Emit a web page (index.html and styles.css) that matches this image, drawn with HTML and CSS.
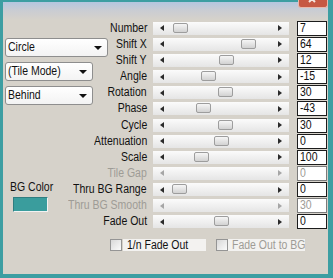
FILE: index.html
```html
<!DOCTYPE html>
<html>
<head>
<meta charset="utf-8">
<link rel="stylesheet" href="styles.css">
</head>
<body>
<div class="window">
  <div class="close"><svg width="30" height="8" viewBox="0 0 30 8"><path d="M11 -3 L17 3 M17 -3 L11 3" stroke="#f4e6e0" stroke-width="2" fill="none"/></svg></div>
  <div class="panel">
    <div class="main">
      <div class="left">
        <div class="select wide"><span class="t">Circle</span><i class="caret"></i></div>
        <div class="select"><span class="t">(Tile Mode)</span><i class="caret"></i></div>
        <div class="select"><span class="t">Behind</span><i class="caret"></i></div>
        <div class="bglabel t">BG Color</div>
        <div class="swatch"></div>
      </div>

      <div class="label">Number</div>
      <div class="track"><i class="arr l"></i><b class="thumb" style="left:20px"></b><i class="arr r"></i></div>
      <div class="num"><span class="t">7</span></div>

      <div class="label">Shift X</div>
      <div class="track"><i class="arr l"></i><b class="thumb" style="left:88px"></b><i class="arr r"></i></div>
      <div class="num"><span class="t">64</span></div>

      <div class="label">Shift Y</div>
      <div class="track"><i class="arr l"></i><b class="thumb" style="left:66px"></b><i class="arr r"></i></div>
      <div class="num"><span class="t">12</span></div>

      <div class="label">Angle</div>
      <div class="track"><i class="arr l"></i><b class="thumb" style="left:48px"></b><i class="arr r"></i></div>
      <div class="num"><span class="t">-15</span></div>

      <div class="label">Rotation</div>
      <div class="track"><i class="arr l"></i><b class="thumb" style="left:65px"></b><i class="arr r"></i></div>
      <div class="num"><span class="t">30</span></div>

      <div class="label">Phase</div>
      <div class="track"><i class="arr l"></i><b class="thumb" style="left:43px"></b><i class="arr r"></i></div>
      <div class="num"><span class="t">-43</span></div>

      <div class="label">Cycle</div>
      <div class="track"><i class="arr l"></i><b class="thumb" style="left:65px"></b><i class="arr r"></i></div>
      <div class="num"><span class="t">30</span></div>

      <div class="label">Attenuation</div>
      <div class="track"><i class="arr l"></i><b class="thumb" style="left:61px"></b><i class="arr r"></i></div>
      <div class="num"><span class="t">0</span></div>

      <div class="label">Scale</div>
      <div class="track"><i class="arr l"></i><b class="thumb" style="left:41px"></b><i class="arr r"></i></div>
      <div class="num"><span class="t">100</span></div>

      <div class="label off">Tile Gap</div>
      <div class="track off"><i class="arr l"></i><i class="arr r"></i></div>
      <div class="num off"><span class="t">0</span></div>

      <div class="label">Thru BG Range</div>
      <div class="track"><i class="arr l"></i><b class="thumb" style="left:19px"></b><i class="arr r"></i></div>
      <div class="num"><span class="t">0</span></div>

      <div class="label off">Thru BG Smooth</div>
      <div class="track off"><i class="arr l"></i><i class="arr r"></i></div>
      <div class="num off"><span class="t">30</span></div>

      <div class="label">Fade Out</div>
      <div class="track"><i class="arr l"></i><b class="thumb" style="left:61px"></b><i class="arr r"></i></div>
      <div class="num"><span class="t">0</span></div>
    </div>

    <div class="checks">
      <div class="check"><span class="box"></span><span class="ctext"><span class="t">1/n Fade Out</span></span></div>
      <div class="check dis"><span class="box"></span><span class="ctext"><span class="t">Fade Out to BG</span></span></div>
    </div>
  </div>
</div>
</body>
</html>
```

FILE: styles.css
```css
* { box-sizing: border-box; }
html, body { margin: 0; padding: 0; }
body {
  width: 333px;
  height: 278px;
  overflow: hidden;
  font-family: "Liberation Sans", Arial, sans-serif;
  font-size: 12.5px;
  color: #111;
}
/* the dialog's UI font is tall and narrow */
.t {
  display: inline-block;
  white-space: nowrap;
  transform: scaleX(0.84);
  transform-origin: left center;
}
.window {
  position: relative;
  width: 333px;
  height: 278px;
  background: #3d9ea2;
  padding: 2px 5px 4px 3px;
}
.close {
  position: absolute;
  top: 0;
  right: 5px;
  width: 30px;
  height: 8px;
  background: #c65843;
  border: 1px solid #e9b7aa;
  border-top: none;
  border-radius: 0 0 3px 3px;
  overflow: hidden;
}
.close svg { display: block; margin: -1px 0 0 -1px; }
.panel {
  height: 100%;
  background: linear-gradient(to bottom, #b4c6df 0px, #c9ccd3 8px, #d6d2ca 18px, #d6d2ca 100%);
  padding-top: 18px;
  display: flex;
  flex-direction: column;
}
.main {
  display: grid;
  grid-template-columns: 105px 45px 144px 30px;
  grid-template-rows: repeat(13, 16.17px);
}
.left {
  grid-column: 1;
  grid-row: 1 / span 13;
  display: flex;
  flex-direction: column;
  align-items: flex-start;
  padding: 18px 0 0 2px;
}
.select {
  width: 88px;
  height: 19px;
  margin-bottom: 5px;
  background: linear-gradient(#ffffff, #f3f3f3);
  border: 1px solid #8e8e8e;
  border-radius: 3px;
  display: flex;
  align-items: center;
  padding: 0 5px 0 2px;
  line-height: 15px;
}
.select.wide { width: 103px; }
.select .t { flex: 1; }
.caret {
  width: 0;
  height: 0;
  border-left: 4px solid transparent;
  border-right: 4px solid transparent;
  border-top: 4px solid #111;
}
.bglabel {
  margin: 70px 0 0 5px;
  line-height: 15px;
}
.swatch {
  width: 35px;
  height: 15px;
  margin: 2px 0 0 8px;
  background: #3a9d9d;
  border-top: 1px solid #2f7d80;
  border-left: 1px solid #2f7d80;
  border-right: 1px solid #f2f2f2;
  border-bottom: 1px solid #f2f2f2;
}
.label {
  grid-column: 2;
  justify-self: end;
  align-self: center;
  margin-right: 6px;
  white-space: nowrap;
  line-height: 15px;
  transform: scaleX(0.84);
  transform-origin: right center;
}
.label.off { color: #9e9c96; }
.track {
  grid-column: 3;
  width: 136px;
  height: 13px;
  align-self: center;
  position: relative;
  display: flex;
  align-items: center;
  background: linear-gradient(#fbfbfb, #e5e5e5);
}
.arr {
  width: 0;
  height: 0;
  border-top: 3.5px solid transparent;
  border-bottom: 3.5px solid transparent;
}
.arr.l { margin-left: 7px; border-right: 4px solid #2a2a2a; }
.arr.r { margin-left: auto; margin-right: 7px; border-left: 4px solid #2a2a2a; }
.track.off .arr.l { border-right-color: #a6a6a6; }
.track.off .arr.r { border-left-color: #a6a6a6; }
.thumb {
  position: absolute;
  top: 1px;
  width: 15px;
  height: 10px;
  border: 1px solid #9d9d9d;
  border-radius: 2px;
  background: linear-gradient(#f6f6f6, #d2d2d2);
}
.num {
  grid-column: 4;
  height: 15px;
  align-self: center;
  background: #fff;
  border: 1px solid #1c1c1c;
  padding-left: 2px;
  line-height: 13px;
  overflow: hidden;
}
.num.off { color: #9e9c96; border-color: #7a7a7a; }
.checks {
  display: flex;
  margin-top: 9px;
  padding-left: 107px;
  gap: 10px;
}
.check { display: flex; align-items: center; height: 12px; }
.box {
  width: 12px;
  height: 12px;
  border: 1px solid #959595;
  background: linear-gradient(135deg, #d8d8d8, #fbfbfb);
}
.ctext {
  display: block;
  background: #f3f2f0;
  height: 12px;
  line-height: 12px;
  margin-left: 1px;
  padding-left: 4px;
  width: 83px;
  overflow: hidden;
}
.check.dis .ctext { width: 77px; color: #9e9c96; margin-left: 0; }
```
